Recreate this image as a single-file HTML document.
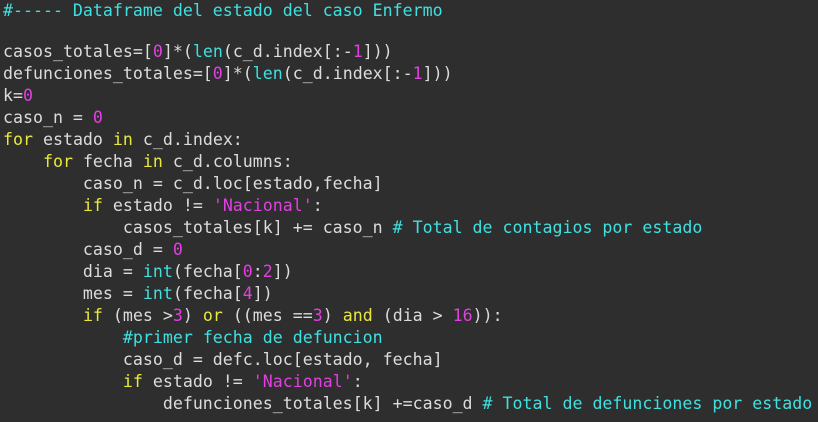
<!DOCTYPE html>
<html><head><meta charset="utf-8"><style>
html,body{margin:0;padding:0;background:#2e2e2e;width:818px;height:422px;overflow:hidden}
.c{position:absolute;left:3px;font-family:"DejaVu Sans Mono","Liberation Mono",monospace;font-size:16.6px;color:#dcdcdc;white-space:pre;line-height:22.05px}
.k{color:#e8e83c}.b{color:#3fe0e0}.n{color:#e040e0}.s{color:#e040e0}.m{color:#3fe0e0}
</style></head><body>
<div class="c" style="top:0px"><span class="m">#----- Dataframe del estado del caso Enfermo</span></div>
<div class="c" style="top:40.5px">casos_totales=[<span class="n">0</span>]*(<span class="b">len</span>(c_d.index[:-<span class="n">1</span>]))
defunciones_totales=[<span class="n">0</span>]*(<span class="b">len</span>(c_d.index[:-<span class="n">1</span>]))
k=<span class="n">0</span>
caso_n = <span class="n">0</span>
<span class="k">for</span> estado <span class="k">in</span> c_d.index:
    <span class="k">for</span> fecha <span class="k">in</span> c_d.columns:
        caso_n = c_d.loc[estado,fecha]
        <span class="k">if</span> estado != <span class="s">'Nacional'</span>:
            casos_totales[k] += caso_n <span class="m"># Total de contagios por estado</span>
        caso_d = <span class="n">0</span>
        dia = <span class="b">int</span>(fecha[<span class="n">0</span>:<span class="n">2</span>])
        mes = <span class="b">int</span>(fecha[<span class="n">4</span>])
        <span class="k">if</span> (mes &gt;<span class="n">3</span>) <span class="k">or</span> ((mes ==<span class="n">3</span>) <span class="k">and</span> (dia &gt; <span class="n">16</span>)):
            <span class="m">#primer fecha de defuncion</span>
            caso_d = defc.loc[estado, fecha]
            <span class="k">if</span> estado != <span class="s">'Nacional'</span>:
                defunciones_totales[k] +=caso_d <span class="m"># Total de defunciones por estado</span></div>
</body></html>
